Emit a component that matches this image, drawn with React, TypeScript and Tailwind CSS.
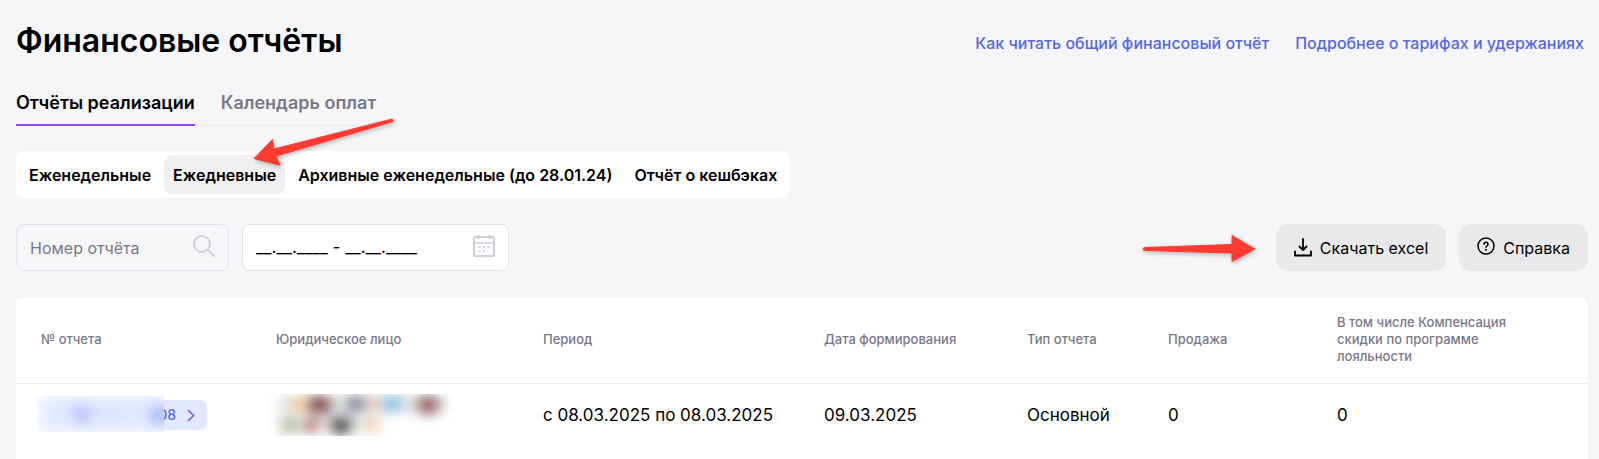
import { ReactNode } from 'react'
import { clsx } from 'clsx'

const tabs = ['Отчёты реализации', 'Календарь оплат']

const periods = [
  'Еженедельные',
  'Ежедневные',
  'Архивные еженедельные (до 28.01.24)',
  'Отчёт о кешбэках',
]

const columns = [
  { title: '№ отчета', className: 'w-[235px]' },
  { title: 'Юридическое лицо', className: 'w-[267px]' },
  { title: 'Период', className: 'w-[281px]' },
  { title: 'Дата формирования', className: 'w-[203px]' },
  { title: 'Тип отчета', className: 'w-[141px]' },
  { title: 'Продажа', className: 'w-[169px]' },
  {
    title: 'В том числе Компенсация скидки по программе лояльности',
    className: 'pr-12',
  },
]

function SearchIcon() {
  return (
    <svg className="shrink-0" width="22" height="22" viewBox="0 0 22 22" fill="none" stroke="#cfced9" strokeWidth="2" strokeLinecap="round">
      <circle cx="9" cy="9" r="8" />
      <path d="M15 15l6 6" />
    </svg>
  )
}

function CalendarIcon() {
  return (
    <svg className="shrink-0" width="22" height="22" viewBox="0 0 22 22" fill="none" stroke="#cfced9" strokeWidth="2">
      <rect x="1" y="2" width="20" height="19" rx="1" />
      <path d="M1 8h20" strokeWidth="1.500" />
      <path d="M5.500 0v4M16.500 0v4" />
      <path d="M5.500 12h2M10 12h2M14.500 12h2M5.500 16h2M10 16h2" />
    </svg>
  )
}

function DownloadIcon() {
  return (
    <svg width="18" height="19" viewBox="0 0 18 19" fill="none" stroke="#000" strokeWidth="1.800" strokeLinecap="round" strokeLinejoin="round">
      <path d="M9 1v11M5.500 8.500L9 12l3.500-3.500M1 13.500v4h16v-4" />
    </svg>
  )
}

function HelpIcon() {
  return (
    <svg className="mb-1" width="18" height="18" viewBox="0 0 18 18" fill="none" stroke="#000" strokeWidth="1.500" strokeLinecap="round">
      <circle cx="9" cy="9" r="8" />
      <path d="M7 7.200a2 2 0 1 1 2.800 1.900c-.6.300-.8.600-.8 1.200" />
      <path d="M9 12.800v.1" strokeWidth="1.900" />
    </svg>
  )
}

function ActionButton({ icon, children }: { icon: ReactNode; children: ReactNode }) {
  return (
    <button type="button" className="flex h-[47px] items-center gap-2 rounded-xl bg-[#e9e9eb] px-[18px] text-base">
      {icon}
      <span>{children}</span>
    </button>
  )
}

function TabArrow() {
  return (
    <svg
      className="pointer-events-none absolute bottom-[26px] left-[86px] drop-shadow-[1px_2px_2px_rgba(0,0,0,0.25)]"
      width="146"
      height="52"
      viewBox="250 116 146 52"
    >
      <path
        d="M254 158.500L272.500 139.500L274 149L391.500 119.200Q394 119.500 393 121.500L276 156.200L280 165.200Z"
        fill="#fe3b30"
        stroke="#fe3b30"
        strokeLinejoin="round"
      />
    </svg>
  )
}

function ButtonArrow() {
  return (
    <svg className="mr-5 drop-shadow-[1px_2px_2px_rgba(0,0,0,0.25)]" width="114" height="30" viewBox="0 0 114 30">
      <path
        d="M1 16Q1 14.500 3 14.500L90 11.500V2.500L113 16L90 28.500V20L3 17.500Q1 17.500 1 16Z"
        fill="#fe3b30"
        stroke="#fe3b30"
        strokeLinejoin="round"
      />
    </svg>
  )
}

function HiddenNumber() {
  return (
    <svg className="absolute -top-1 -left-2" width="127" height="36" viewBox="0 0 127 36">
      <defs>
        <filter id="number-blur" x="-30%" y="-60%" width="160%" height="220%">
          <feGaussianBlur stdDeviation="7" />
        </filter>
      </defs>
      <rect width="127" height="36" fill="#fff" />
      <g filter="url(#number-blur)">
        <rect x="4" y="0" width="160" height="36" fill="#e2e8ff" />
        <circle cx="45" cy="18" r="8" fill="#a0abf2" />
        <rect x="60" y="12" width="26" height="12" fill="#dfe0f6" />
        <circle cx="122" cy="19" r="10" fill="#9db3f4" />
      </g>
    </svg>
  )
}

function HiddenEntity() {
  return (
    <svg className="-ml-3 block" width="200" height="42" viewBox="0 0 200 42">
      <defs>
        <filter id="entity-blur" x="-20%" y="-40%" width="140%" height="180%">
          <feGaussianBlur stdDeviation="6" />
        </filter>
      </defs>
      <g filter="url(#entity-blur)">
        <rect x="14" y="1" width="168" height="18" fill="#e2e6e5" />
        <rect x="14" y="22" width="100" height="16" fill="#e8e6e0" />
        <circle cx="35" cy="10" r="9" fill="#f0cba0" />
        <ellipse cx="56" cy="11" rx="14" ry="10" fill="#8c5656" />
        <ellipse cx="92" cy="10" rx="12" ry="9" fill="#8c91a8" />
        <circle cx="110" cy="10" r="7" fill="#f0c9a8" />
        <ellipse cx="128" cy="10" rx="12" ry="9" fill="#8fc6e6" />
        <ellipse cx="164" cy="11" rx="13" ry="10" fill="#9c6a6e" />
        <circle cx="26" cy="31" r="9" fill="#b9bda2" />
        <circle cx="47" cy="31" r="9" fill="#bd8d91" />
        <ellipse cx="77" cy="31" rx="13" ry="10" fill="#606468" />
        <circle cx="109" cy="31" r="8" fill="#f3d3b6" />
      </g>
    </svg>
  )
}

export default function App() {
  return (
    <main className="min-h-screen bg-[#f6f6f9] pt-4 pr-[11px] pl-4 font-['Inter','Noto_Sans',sans-serif] text-black">
      <header className="flex items-center justify-between pr-1">
        <h1 className="text-[32px] leading-[50px] font-semibold">Финансовые отчёты</h1>
        <div className="flex gap-[26px] pt-1 text-base font-medium text-[#5468e2]">
          <a href="#how-to-read">Как читать общий финансовый отчёт</a>
          <a href="#tariffs">Подробнее о тарифах и удержаниях</a>
        </div>
      </header>

      <nav className="mt-[23px] flex w-fit gap-[26px] border-b border-[#ededf1]">
        {tabs.map((tab, i) => (
          <a
            key={tab}
            href={`#tab-${i}`}
            className={clsx(
              '-mb-px border-b-2 pb-[7px] text-lg leading-7 font-semibold',
              i === 0 ? 'border-[#9a41fe]' : 'border-transparent text-[#797788]'
            )}
          >
            {tab}
          </a>
        ))}
      </nav>

      <div className="mt-[25px] flex h-[47px] w-fit items-center gap-1 rounded-lg bg-white px-1">
        {periods.map((period, i) => (
          <button
            key={period}
            type="button"
            className={clsx(
              'relative h-[39px] rounded-lg px-[9px] text-base font-semibold',
              i === 1 && 'bg-[#f0f0f3]'
            )}
          >
            {period}
            {i === 1 && <TabArrow />}
          </button>
        ))}
      </div>

      <div className="mt-[26px] flex items-center justify-between">
        <div className="flex gap-[13px]">
          <label className="flex h-[47px] w-[213px] items-center rounded-lg border border-[#e3e2ec] px-[13px] pb-1">
            <input
              type="text"
              aria-label="Номер отчёта"
              placeholder="Номер отчёта"
              className="w-full min-w-0 bg-transparent pt-1 text-base outline-none placeholder:text-[#797788]"
            />
            <SearchIcon />
          </label>
          <label className="flex h-[47px] w-[267px] items-center rounded-lg border border-[#e3e2ec] bg-white px-[13px] pb-1">
            <input
              type="text"
              aria-label="Период"
              defaultValue="__.__.____ - __.__.____"
              className="w-full min-w-0 bg-transparent pt-1 text-[17px] outline-none"
            />
            <CalendarIcon />
          </label>
        </div>
        <div className="flex items-center">
          <ButtonArrow />
          <div className="flex gap-[13px]">
            <ActionButton icon={<DownloadIcon />}>Скачать excel</ActionButton>
            <ActionButton icon={<HelpIcon />}>Справка</ActionButton>
          </div>
        </div>
      </div>

      <section className="mt-[26px] min-h-[162px] rounded-t-lg bg-white">
        <table className="w-full table-fixed text-left [&_td]:pl-[25px] [&_th]:pl-[25px]">
          <thead>
            <tr className="h-[86px] border-b border-[#ececf0] text-[13px] leading-[17px] text-[#797788]">
              {columns.map(column => (
                <th key={column.title} className={clsx('font-medium', column.className)}>
                  {column.title}
                </th>
              ))}
            </tr>
          </thead>
          <tbody>
            <tr className="h-16 text-[17px]">
              <td>
                <a
                  href="#report"
                  className="relative ml-1 flex h-[30px] w-[162px] items-center justify-end gap-[11px] rounded-md bg-[#e2e8ff] pr-3 text-sm font-medium text-[#5468e2]"
                >
                  <span>08</span>
                  <svg width="8" height="13" viewBox="0 0 8 13" fill="none" stroke="#5468e2" strokeWidth="1.500">
                    <path d="M1 1l5.500 5.500L1 12" />
                  </svg>
                  <HiddenNumber />
                </a>
              </td>
              <td>
                <HiddenEntity />
              </td>
              <td>с 08.03.2025 по 08.03.2025</td>
              <td>09.03.2025</td>
              <td>Основной</td>
              <td>0</td>
              <td>0</td>
            </tr>
          </tbody>
        </table>
      </section>
    </main>
  )
}
